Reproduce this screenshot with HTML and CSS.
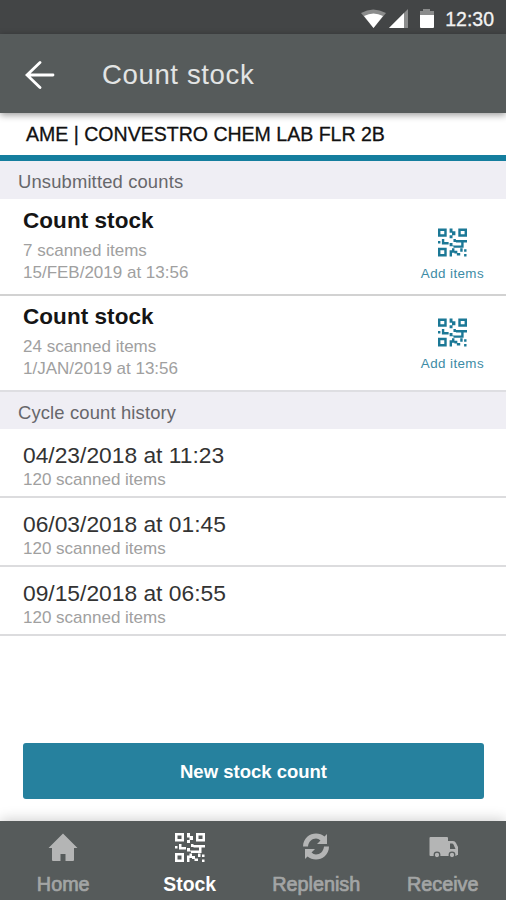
FILE: index.html
```
<!DOCTYPE html>
<html lang="en">
<head>
    <meta charset="UTF-8">
    <meta name="viewport" content="width=device-width, initial-scale=1.0">
    <title>Count stock</title>
    <link rel="stylesheet" href="styles.css">
</head>
<body>
    <svg class="defs" width="0" height="0">
        <symbol id="qr" viewBox="0 0 30 30">
            <path fill-rule="evenodd" d="M0 1h9v8.500H0zM2.500 3.500V7h4V3.500zM21 1h9v8.500h-9zM23.500 3.500V7h4V3.500zM0 21h9v9H0zM2.500 23.500v4h4v-4z"/>
            <path d="M12 1h3v3h3v4h-3v3h-3V8h2.500V5.500H12zM4 12h2.500v3H11v2.500H4zM0 14h2.500v2.500H0zM16 12h2.500v1H30v2.500h-3.500V21H20v-2.500h4v-3h-5.500V15H16zM12 16h3v2.500h5V21h-4v-1.500h-4zM12 23.500h2.500v-2H17V24h3v2.500h3V29h-3.500v-2H17v-1h-2.500v4H12zM23 21.500h2.500V25H23zM27 22.500h2.500V25H27zM27 27.500h2.500V30H27z"/>
        </symbol>
    </svg>

    <div class="status-bar">
        <svg class="status-icons" width="76" height="22" viewBox="0 0 76 22">
            <path d="M1 5Q13-2 26 5L13.500 20z" fill="#8b8c8c"/>
            <path d="M4 8Q13.500 3 23 8L13.500 20z" fill="#fff"/>
            <path d="M48 1v19H29z" fill="#8b8c8c"/>
            <path d="M44 5v15H29z" fill="#fff"/>
            <path d="M60 3h3V1h7v2h4v4H60z" fill="#8b8c8c"/>
            <path d="M60 7h14v12q0 1-1 1H61q-1 0-1-1z" fill="#fff"/>
        </svg>
        <span class="clock">12:30</span>
    </div>

    <div class="header">
        <svg class="back" width="30" height="30" viewBox="0 0 30 30">
            <path d="M15 2.500L2 15l13 12.500M2.500 15H28"/>
        </svg>
        <h1>Count stock</h1>
    </div>

    <div class="location">AME | CONVESTRO CHEM LAB FLR 2B</div>

    <h2 class="section">Unsubmitted counts</h2>
    <div class="count">
        <div class="count-info">
            <h3>Count stock</h3>
            <p>7 scanned items</p>
            <p>15/FEB/2019 at 13:56</p>
        </div>
        <div class="add-items">
            <svg class="qr"><use href="#qr"/></svg>
            <span>Add items</span>
        </div>
    </div>
    <div class="count count-last">
        <div class="count-info">
            <h3>Count stock</h3>
            <p>24 scanned items</p>
            <p>1/JAN/2019 at 13:56</p>
        </div>
        <div class="add-items">
            <svg class="qr"><use href="#qr"/></svg>
            <span>Add items</span>
        </div>
    </div>

    <h2 class="section section-history">Cycle count history</h2>
    <div class="history">
        <h4>04/23/2018 at 11:23</h4>
        <p>120 scanned items</p>
    </div>
    <div class="history">
        <h4>06/03/2018 at 01:45</h4>
        <p>120 scanned items</p>
    </div>
    <div class="history">
        <h4>09/15/2018 at 06:55</h4>
        <p>120 scanned items</p>
    </div>

    <button class="new-count">New stock count</button>

    <div class="nav">
        <div class="nav-item">
            <svg class="nav-icon" viewBox="0 0 30 30">
                <path d="M15 1.500L29.500 16H26v12q0 1-1 1h-7.500v-7h-5v7H5q-1 0-1-1V16H.5z"/>
            </svg>
            <span>Home</span>
        </div>
        <div class="nav-item active">
            <svg class="nav-icon"><use href="#qr"/></svg>
            <span>Stock</span>
        </div>
        <div class="nav-item">
            <svg class="nav-icon" viewBox="0 0 30 30">
                <path d="M2 14.500C2 6 9 1.500 15 1.500q5 0 8.500 3L26 2v10H16l3.500-3.500Q17.500 6.500 15 6.500c-4 0-7.500 3-8 8z"/>
                <path d="M28 14.500c0 8.500-7 13-13 13q-5 0-8.500-3L4 27V17h10l-3.500 3.500q2 2 4.500 2c4 0 7.500-3 8-8z"/>
            </svg>
            <span>Replenish</span>
        </div>
        <div class="nav-item">
            <svg class="nav-icon" viewBox="0 0 30 30">
                <path fill-rule="evenodd" d="M2.500 5H19q1 0 1 1v3h5q2 0 3 2l2 4v8h-1.500v1h-26q-1 0-1-1V6q0-1 1-1zM22 11.500V17h5.500l-2-4.500q-.5-1-1.500-1z"/>
                <g class="wheels">
                    <circle cx="9" cy="23" r="2.800"/>
                    <circle cx="24" cy="23" r="2.800"/>
                </g>
            </svg>
            <span>Receive</span>
        </div>
    </div>
</body>
</html>
```

FILE: styles.css
```
* { box-sizing: border-box; }
body { font-family: "Liberation Sans", Arial, sans-serif; margin: 0; height: 900px; display: flex; flex-direction: column; background-color: #fff; overflow: hidden; }
h1, h2, h3, h4, p { margin: 0; font-weight: normal; white-space: nowrap; }
.defs { display: block; flex: none; }

.status-bar { flex: none; height: 34px; display: flex; justify-content: flex-end; align-items: center; gap: 9px; padding: 4px 12px 0 0; background-color: #434546; color: #f2f2f2; }
.clock { font-size: 19.5px; -webkit-text-stroke: 0.3px #f2f2f2; }

.header { flex: none; height: 79px; display: flex; align-items: center; gap: 47px; padding: 3px 0 0 25px; background-color: #565b5b; box-shadow: 0 2px 7px rgba(0,0,0,0.4); position: relative; z-index: 1; }
.header h1 { font-size: 27.6px; letter-spacing: 0.6px; color: #e2e4e4; }
.back { fill: none; stroke: #fff; stroke-width: 2.8; stroke-linecap: round; }

.location { flex: none; height: 48px; padding: 0 26px; border-bottom: 6px solid #147e9e; font-size: 19.55px; line-height: 43px; color: #111; white-space: nowrap; -webkit-text-stroke: 0.3px #111; }

.section { flex: none; height: 38px; padding: 0 18px; background-color: #efeef4; font-size: 18.4px; line-height: 41px; letter-spacing: 0.15px; color: #67676b; }
.section-history { height: 37px; }

.count { flex: none; height: 97px; display: flex; justify-content: space-between; padding: 8px 22px 0 23px; border-bottom: 2px solid #d2d2d2; }
.count-last { height: 96px; padding-top: 7px; border-bottom-color: #dedee2; }
.count h3 { font-size: 22.5px; line-height: 27px; letter-spacing: 0.05px; font-weight: bold; color: #151515; }
.count p, .history p { font-size: 17px; line-height: 22px; color: #a0a0a0; }
.count h3 { margin-bottom: 6px; }
.add-items { display: flex; flex-direction: column; align-items: center; gap: 9px; padding-top: 20px; font-size: 13.4px; letter-spacing: 0.4px; line-height: 16px; color: #3c8ba5; }
.count-last .add-items { padding-top: 14px; }
.qr { width: 29px; height: 30px; fill: #1b7896; }

.history { flex: none; height: 69px; padding: 13px 23px 0; border-bottom: 2px solid #dcdcde; }
.history h4 { font-size: 22.8px; line-height: 26px; margin-bottom: 1px; color: #333; }

.new-count { flex: none; height: 56px; margin: auto 22px 22px 23px; padding-top: 3px; border: none; border-radius: 3px; background-color: #26819e; font-family: inherit; font-size: 18.5px; font-weight: bold; color: #fff; cursor: pointer; }

.nav { flex: none; height: 79px; display: grid; grid-template-columns: repeat(4, 1fr); background-color: #565b5b; box-shadow: 0 -2px 12px rgba(0,0,0,0.18); }
.nav-item { display: flex; flex-direction: column; align-items: center; gap: 11px; padding-top: 11px; font-size: 19.8px; line-height: 23px; color: #a3a5a5; -webkit-text-stroke: 0.7px #a3a5a5; }
.nav-icon { width: 30px; height: 30px; fill: #b4b5b5; stroke: none; }
.wheels { fill: #b4b5b5; stroke: #565b5b; stroke-width: 1.3; }
.active { font-size: 19.4px; font-weight: bold; color: #fff; -webkit-text-stroke: 0; }
.active .nav-icon { fill: #fff; }
```
